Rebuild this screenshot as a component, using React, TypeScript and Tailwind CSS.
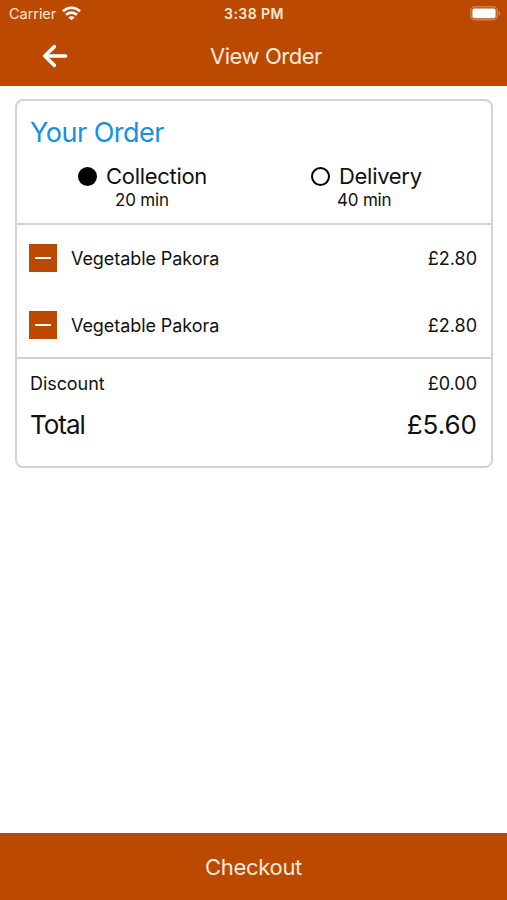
const items = [
  { id: 1, name: "Vegetable Pakora", price: "£2.80" },
  { id: 2, name: "Vegetable Pakora", price: "£2.80" },
];

function WifiIcon() {
  return (
    <svg width="19" height="15" viewBox="0 0 19 15" fill="none" stroke="white" strokeWidth="2.7">
      <path d="M1 5.2C5.8 0.6 13.2 0.6 18 5.2" />
      <path d="M4 8.8C7.2 5.8 11.8 5.8 15 8.8" />
      <path d="M9.5 14.3L6.3 11.4C8.2 9.7 10.8 9.7 12.7 11.4Z" fill="white" stroke="none" />
    </svg>
  );
}

function BatteryIcon() {
  return (
    <svg width="31" height="15" viewBox="0 0 31 15" fill="none">
      <rect x="0.8" y="0.8" width="26.4" height="13" rx="4" stroke="white" strokeOpacity="0.3" strokeWidth="1.5" />
      <rect x="2.4" y="2.6" width="23.2" height="9.6" rx="1.8" fill="white" />
      <path d="M28.6 5C30.5 5.6 30.5 8.9 28.6 9.5Z" fill="white" fillOpacity="0.4" />
    </svg>
  );
}

function BackIcon() {
  return (
    <svg width="26" height="24" viewBox="0 0 26 24" fill="none" stroke="white" strokeWidth="3.6" strokeLinecap="round" strokeLinejoin="round">
      <path d="M12.4 2.6L2.8 12L12.4 21.4" />
      <path d="M3 12H23.6" />
    </svg>
  );
}

function Option({ label, time, selected }: { label: string; time: string; selected?: boolean }) {
  return (
    <div className="flex flex-col">
      <div className="flex h-7 items-center">
        <span className={`mr-[9px] h-[19px] w-[19px] rounded-full border-2 border-black ${selected ? "bg-black" : ""}`} />
        <span className="text-[22px] leading-7 tracking-[-0.3px]">{label}</span>
      </div>
      <span className={`text-[17px] leading-5 tracking-[-0.2px] ${selected ? "ml-[37px]" : "ml-[26px]"}`}>{time}</span>
    </div>
  );
}

export default function App() {
  return (
    <div className="flex h-[900px] w-full flex-col bg-white font-['Inter',sans-serif] text-[#111111]">
      <header className="h-[86px] bg-[#bb4900] text-white">
        <div className="grid h-[27px] grid-cols-3 items-center px-[7px] pr-[6px]">
          <div className="flex items-center gap-[6px]">
            <span className="ml-[2px] text-[14.5px] tracking-[-0.05px] text-[#ffe9dc]">Carrier</span>
            <WifiIcon />
          </div>
          <span className="text-center text-[14px] font-semibold tracking-[0.45px] text-[#ffe9dc]">3:38 PM</span>
          <div className="flex justify-end">
            <BatteryIcon />
          </div>
        </div>
        <div className="flex h-[58px] items-center pl-[42px]">
          <button aria-label="Back" className="w-[26px]">
            <BackIcon />
          </button>
          <h1 className="ml-[142px] text-[22px] tracking-[-0.45px] text-[#ffe9dc]">View Order</h1>
        </div>
      </header>

      <main className="flex-1 pl-[15px] pr-[14px] pt-[13px]">
        <section className="h-[369px] rounded-lg border-2 border-[#d3d3d3]">
          <div className="h-[124px] border-b-2 border-[#d3d3d3] pt-[14px]">
            <h2 className="ml-[13px] text-[27px] leading-9 tracking-[-0.5px] text-[#1491e0]">Your Order</h2>
            <div className="mt-[11px] flex pl-[61px]">
              <div className="w-[233px]">
                <Option label="Collection" time="20 min" selected />
              </div>
              <Option label="Delivery" time="40 min" />
            </div>
          </div>

          <ul className="h-[134px] border-b-2 border-[#d3d3d3]">
            {items.map((item) => (
              <li key={item.id} className="flex h-[67px] items-center pb-px pl-[12px] pr-[14px] text-[18px]">
                <button aria-label="Remove" className="flex h-[28px] w-[28px] items-center justify-center bg-[#bb4900]">
                  <span className="h-[2px] w-4 bg-white" />
                </button>
                <span className="ml-[14px] tracking-[-0.07px]">{item.name}</span>
                <span className="ml-auto">{item.price}</span>
              </li>
            ))}
          </ul>

          <div className="pl-[13px] pr-[14px] pt-[11px]">
            <div className="flex justify-between text-[18px] leading-7">
              <span className="tracking-[-0.07px]">Discount</span>
              <span>£0.00</span>
            </div>
            <div className="mt-[9px] flex justify-between text-[26px] leading-9">
              <span className="tracking-[-1px]">Total</span>
              <span>£5.60</span>
            </div>
          </div>
        </section>
      </main>

      <button className="h-[67px] bg-[#bb4900] pb-px pt-[2px] text-[22px] tracking-[-0.3px] text-[#ffe9dc]">Checkout</button>
    </div>
  );
}
